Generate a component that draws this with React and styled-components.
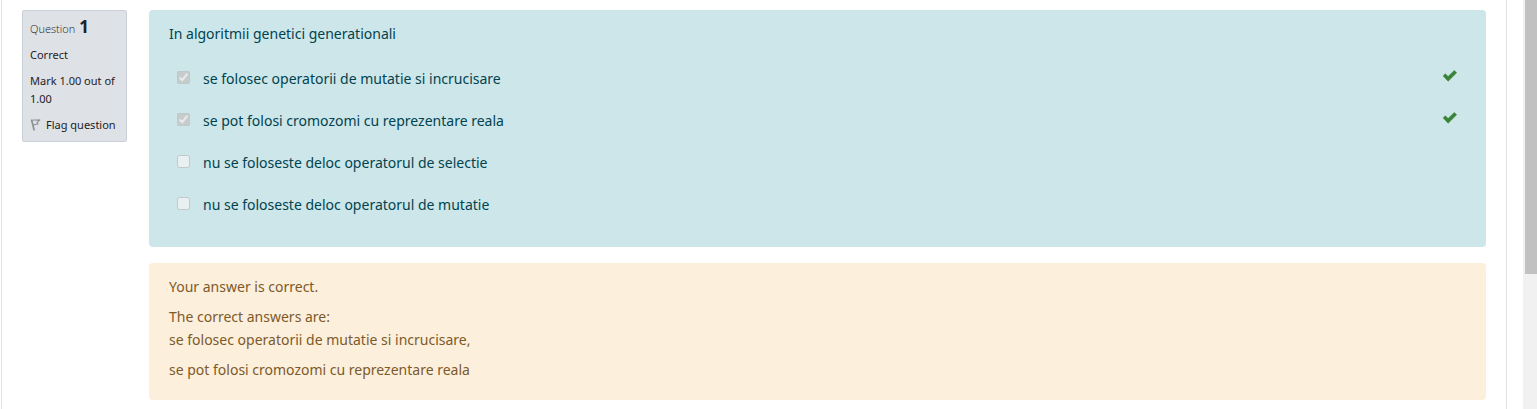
import React from "react";
import styled, { createGlobalStyle } from "styled-components";

const GlobalStyle = createGlobalStyle`
  * { box-sizing: border-box; }
  body {
    margin: 0;
    background: #fff;
    color: #1d2125;
    font-family: "Noto Sans", "Open Sans", sans-serif;
    font-size: 14px;
    line-height: 23px;
  }
  p, h3 { margin: 0; font-weight: 400; }
`;

const Page = styled.div`
  display: flex;
  gap: 16px;
  min-height: 100vh;
  padding-left: 1px;
`;

const Region = styled.main`
  flex: 1;
  min-width: 0;
  display: flex;
  align-items: flex-start;
  gap: 22px;
  padding: 10px 20px 8px;
  border: solid #dee2e6;
  border-width: 0 1px;
`;

const Info = styled.aside`
  flex: none;
  width: 105px;
  display: flex;
  flex-direction: column;
  gap: 8px;
  padding: 7px;
  background: #dee2e6;
  border: 1px solid #cad0d7;
  border-radius: 2px;
  font-size: 11px;
  line-height: 18px;
  white-space: nowrap;
`;

const QuestionNo = styled.h3`
  display: flex;
  align-items: baseline;
  gap: 4px;
  font-family: "Open Sans", sans-serif;
  font-size: 11px;
  line-height: 18px;
  font-weight: 300;
`;

const Number = styled.strong`
  font-size: 17px;
  font-weight: 700;
`;

const Flag = styled.a`
  display: flex;
  align-items: center;
  gap: 4px;
  color: inherit;
  text-decoration: none;
`;

const Content = styled.div`
  flex: 1;
  min-width: 0;
  display: flex;
  flex-direction: column;
  gap: 16px;
`;

const Panel = styled.section`
  padding: 12px 20px;
  border-radius: 4px;
`;

const Formulation = styled(Panel)`
  padding-bottom: 22px;
  background: #cde6ea;
  color: #00434e;
`;

const Outcome = styled(Panel)`
  display: flex;
  flex-direction: column;
  gap: 7px;
  padding-bottom: 19px;
  background: #fcefdc;
  color: #7d5a29;
`;

const Answers = styled.div`
  margin-top: 12px;
`;

const Answer = styled.div`
  display: flex;
  align-items: center;
  height: 42px;
  padding: 0 8px;
`;

const Tick = styled.input`
  width: 13px;
  height: 13px;
  margin: 0 13px 2px 0;
`;

const AnswerLabel = styled.label`
  flex: 1;
`;

const Mark = styled.svg`
  flex: none;
  margin-bottom: 4px;
`;

const ScrollTrack = styled.div`
  flex: none;
  width: 14px;
  padding-left: 2px;
  background: #f1f1f1;
`;

const ScrollThumb = styled.div`
  height: 67vh;
  background: #c1c1c1;
`;

const answers = [
  { text: "se folosec operatorii de mutatie si incrucisare", chosen: true },
  { text: "se pot folosi cromozomi cu reprezentare reala", chosen: true },
  { text: "nu se foloseste deloc operatorul de selectie", chosen: false },
  { text: "nu se foloseste deloc operatorul de mutatie", chosen: false },
];

const CorrectMark = () => (
  <Mark width="16" height="12" viewBox="0 0 16 12" role="img" aria-label="Correct">
    <path d="M1.2 5.9 L3.3 3.8 L6.1 6.6 L12.3 0.5 L14.6 2.8 L6.1 11.2 Z" fill="#398439" stroke="#398439" strokeWidth="0.6" strokeLinejoin="round" />
  </Mark>
);

const FlagIcon = () => (
  <svg width="12" height="14" viewBox="0 0 12 14" fill="none" stroke="#8b8e91" strokeLinejoin="round" aria-hidden="true">
    <path d="M1.5 1.5 L4.2 12.5" strokeWidth="1.6" />
    <path d="M2 2.4 C4 1.2 6 2.8 9.8 1.8 L7 4.6 L8 6 C6 5.6 5 7 3.1 7" strokeWidth="1.1" />
  </svg>
);

export default function App() {
  return (
    <>
      <GlobalStyle />
      <Page>
        <Region>
          <Info>
            <QuestionNo>
              <span>Question</span> <Number>1</Number>
            </QuestionNo>
            <p>Correct</p>
            <p>
              Mark 1.00 out of
              <br />
              1.00
            </p>
            <Flag href="#flag">
              <FlagIcon />
              Flag question
            </Flag>
          </Info>
          <Content>
            <Formulation>
              <p>In algoritmii genetici generationali</p>
              <Answers>
                {answers.map(({ text, chosen }, i) => (
                  <Answer key={text}>
                    <Tick type="checkbox" id={`answer${i}`} defaultChecked={chosen} disabled />
                    <AnswerLabel htmlFor={`answer${i}`}>{text}</AnswerLabel>
                    {chosen && <CorrectMark />}
                  </Answer>
                ))}
              </Answers>
            </Formulation>
            <Outcome>
              <p>Your answer is correct.</p>
              <p>
                The correct answers are:
                <br />
                se folosec operatorii de mutatie si incrucisare,
              </p>
              <p>se pot folosi cromozomi cu reprezentare reala</p>
            </Outcome>
          </Content>
        </Region>
        <ScrollTrack aria-hidden="true">
          <ScrollThumb />
        </ScrollTrack>
      </Page>
    </>
  );
}
